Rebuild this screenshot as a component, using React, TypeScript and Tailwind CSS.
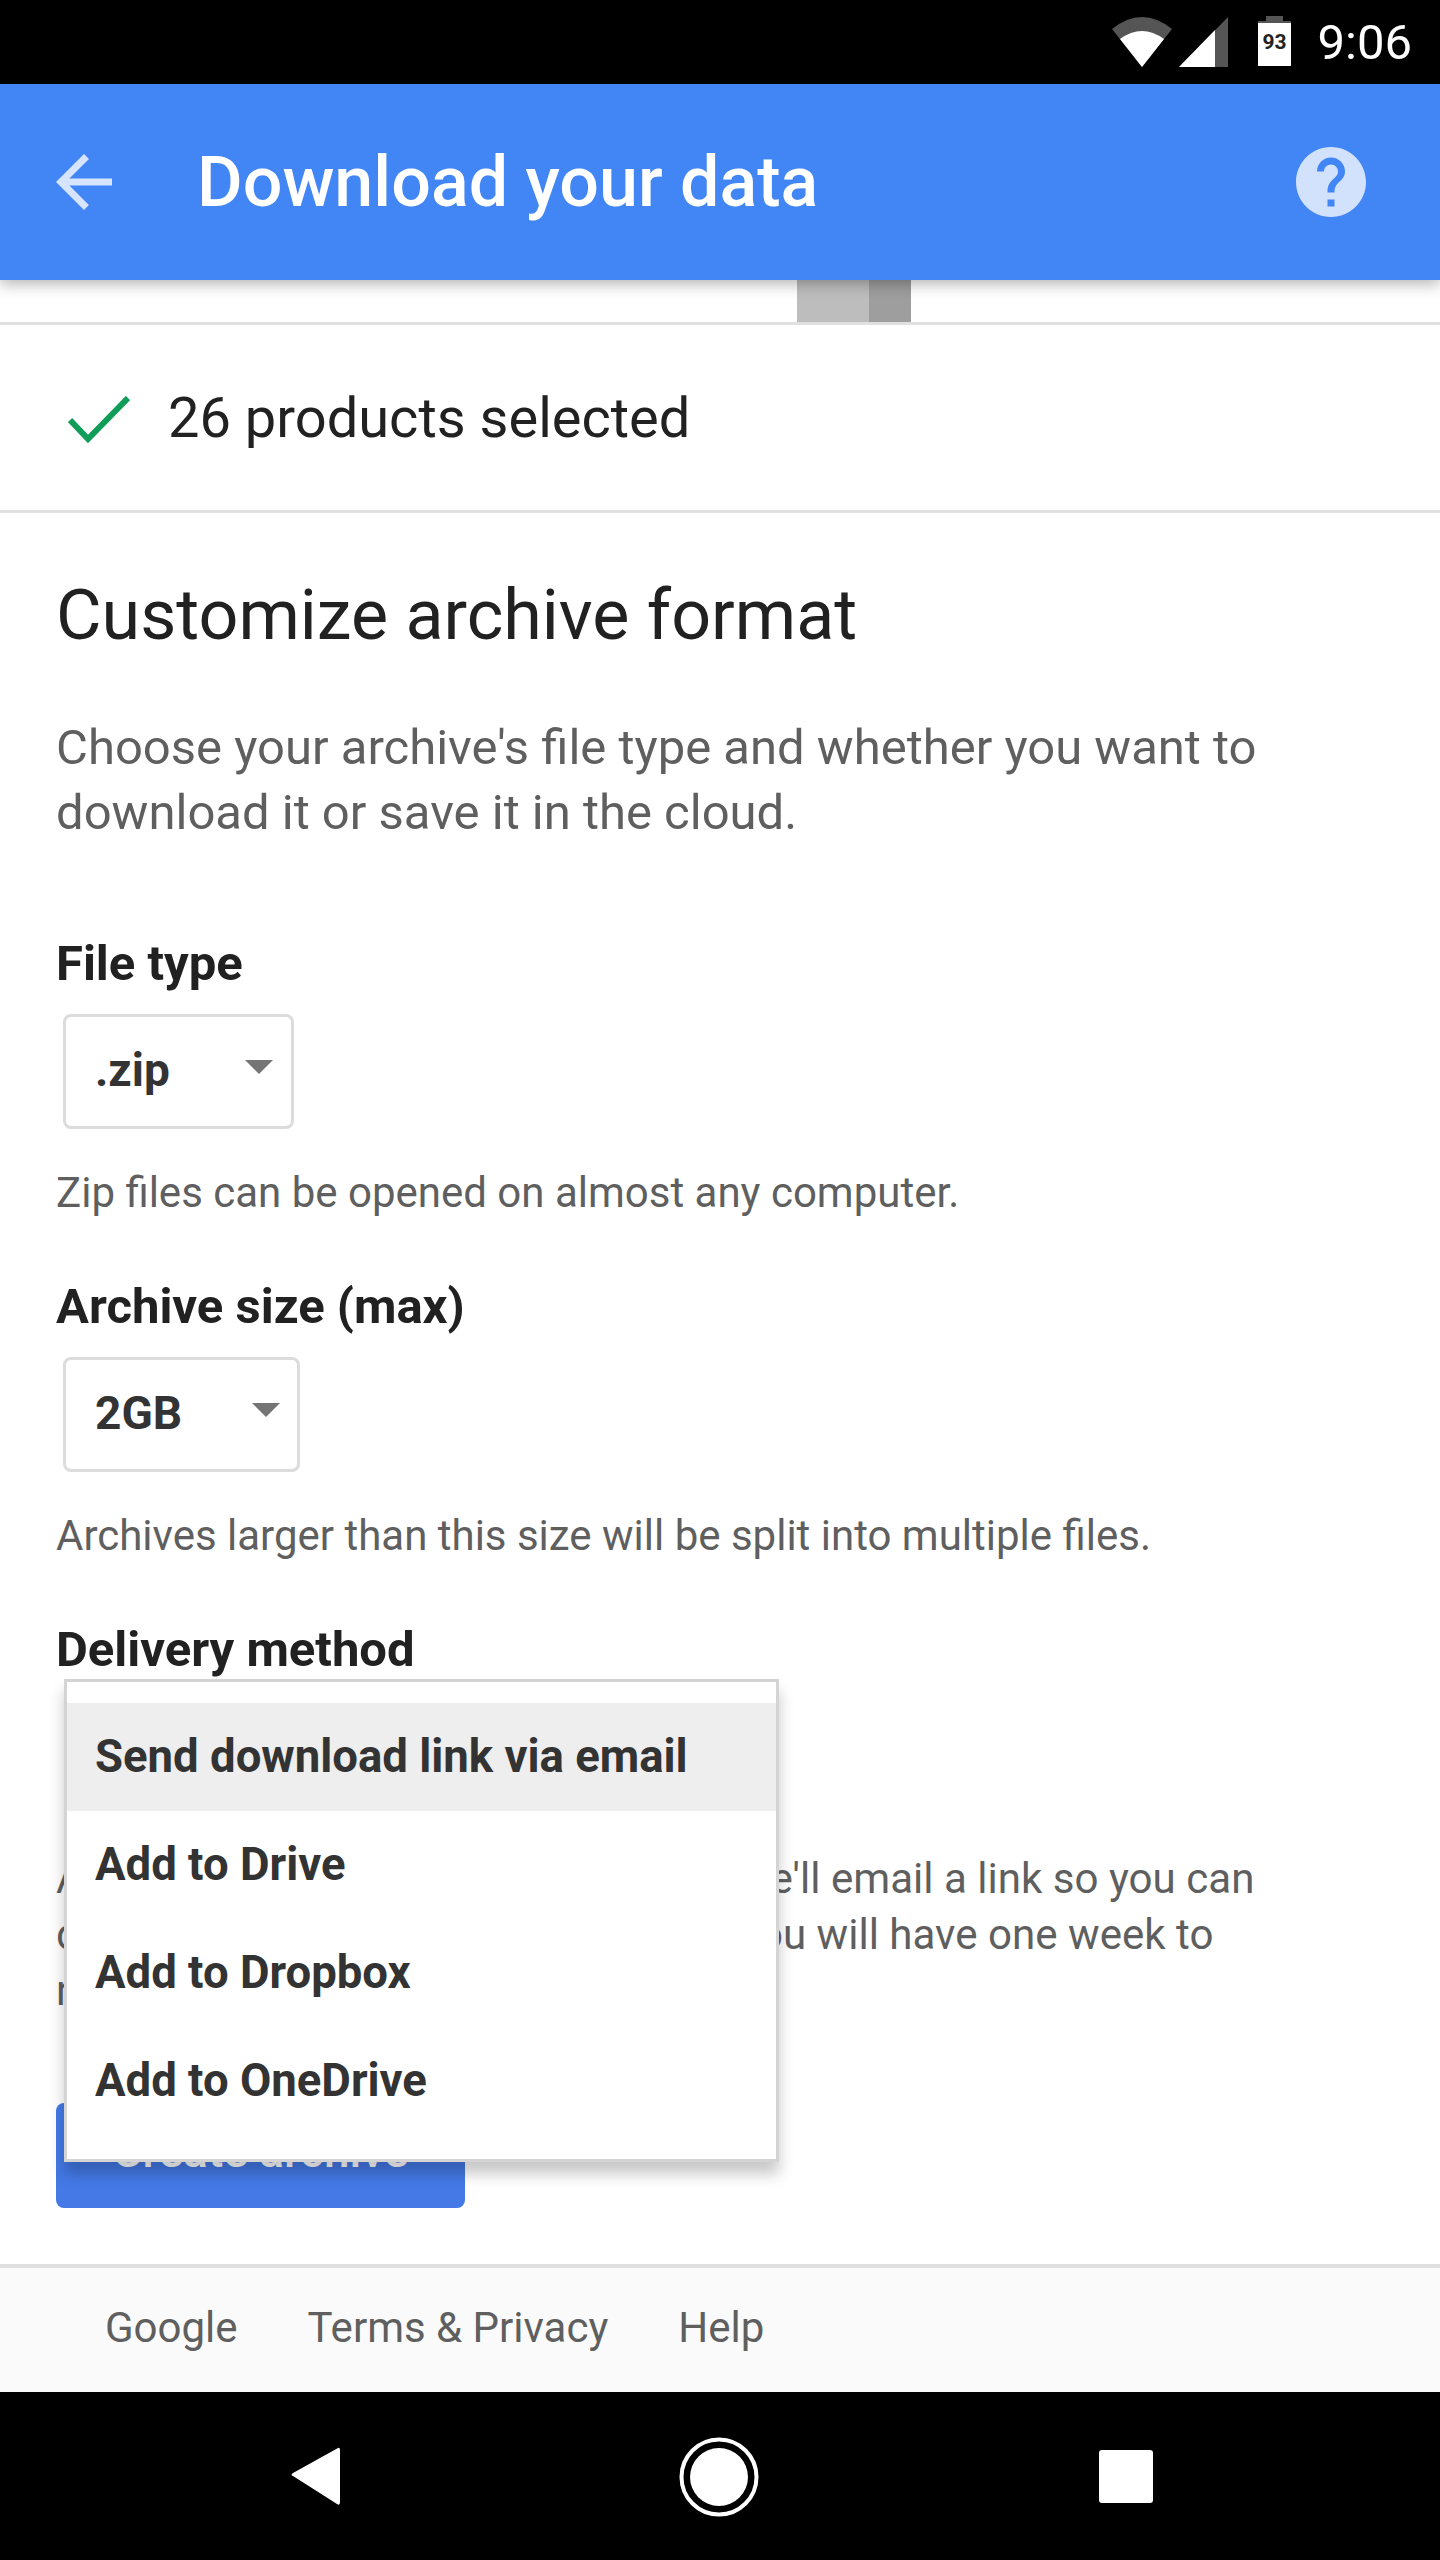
const font = "font-['Roboto',sans-serif]";

function StatusBar() {
  return (
    <div className="h-[84px] shrink-0 bg-black flex items-center justify-end pr-[28px]">
      <svg width="60" height="50" viewBox="0 0 60 50" className="mr-[7px] mt-[-1px]">
        <path d="M0 12 Q30 -12 60 12 L30 50 Z" fill="#555" />
        <path d="M8 22 Q30 6 52 22 L30 50 Z" fill="#fff" />
      </svg>
      <svg width="49" height="50" viewBox="0 0 49 50" className="mr-[30px] mt-[-1px]">
        <path d="M0 50 L49 0 V50 Z" fill="#555" />
        <path d="M0 50 L36 13 V50 Z" fill="#fff" />
      </svg>
      <svg width="33" height="50" viewBox="0 0 33 50" className="mr-[27px] mt-[-2px]">
        <rect x="8" y="0" width="17" height="6" fill="#555" />
        <rect x="0" y="5" width="33" height="6" fill="#555" />
        <rect x="0" y="7" width="33" height="43" fill="#fff" />
        <text x="16.5" y="33" textAnchor="middle" fontSize="21" fontWeight="700" fill="#222" fontFamily="Roboto">93</text>
      </svg>
      <span className="text-[49px] leading-none text-white">9:06</span>
    </div>
  );
}

function Header() {
  return (
    <div className="relative z-10 h-[196px] shrink-0 bg-[#4285f4] shadow-[0_4px_14px_rgba(0,0,0,0.3)] flex items-center pl-[42px] pr-[67px]">
      <svg width="84" height="84" viewBox="0 0 24 24" fill="#d6e4fd">
        <path d="M20 11H7.83l5.59-5.59L12 4l-8 8 8 8 1.41-1.41L7.83 13H20v-2z" />
      </svg>
      <h1 className="ml-[71px] flex-1 text-[70px] font-medium text-white leading-none">Download your data</h1>
      <svg width="84" height="84" viewBox="0 0 24 24" fill="#d2e2fc">
        <path d="M12 2C6.48 2 2 6.48 2 12s4.48 10 10 10 10-4.48 10-10S17.52 2 12 2zm1 17h-2v-2h2v2zm2.07-7.75l-.9.92C13.45 12.9 13 13.5 13 15h-2v-.5c0-1.1.45-2.1 1.17-2.83l1.24-1.26c.37-.36.59-.86.59-1.41 0-1.1-.9-2-2-2s-2 .9-2 2H8c0-2.21 1.79-4 4-4s4 1.79 4 4c0 .88-.36 1.68-.93 2.25z" />
      </svg>
    </div>
  );
}

function Select({ value, width, gap }: { value: string; width: string; gap: string }) {
  return (
    <div className={`ml-[7px] mt-[22px] h-[115px] ${width} rounded-[8px] border-[3px] border-[#dcdcdc] flex items-center pl-[29px]`}>
      <span className="mb-[4px] text-[46px] font-bold text-[#333] leading-none">{value}</span>
      <span className={`${gap} mb-[9px] h-0 w-0 border-x-[14px] border-t-[14px] border-x-transparent border-t-[#757575]`} />
    </div>
  );
}

function Label({ children }: { children: string }) {
  return <div className="text-[49px] font-bold text-[#212121] leading-[56px]">{children}</div>;
}

function Hint({ children }: { children: string }) {
  return <p className="mt-[36px] text-[42px] text-[#5f5f5f] leading-[56px]">{children}</p>;
}

function Dropdown() {
  const items = ["Send download link via email", "Add to Drive", "Add to Dropbox", "Add to OneDrive"];
  return (
    <div className="absolute left-[64px] top-[1399px] w-[715px] border-[3px] border-[#d4d4d4] bg-white pt-[21px] pb-[24px] shadow-[0_12px_14px_rgba(0,0,0,0.22)]">
      {items.map((item, i) => (
        <div key={item} className={`h-[108px] flex items-center pl-[28px] text-[45.5px] font-bold text-[#333] ${i === 0 ? "bg-[#eeeeee]" : ""}`}>
          {item}
        </div>
      ))}
    </div>
  );
}

export default function App() {
  return (
    <div className={`${font} relative h-[2560px] w-[1440px] overflow-hidden bg-white flex flex-col`}>
      <StatusBar />
      <Header />
      <div className="relative flex-1 flex flex-col">
        <div className="h-[42px] shrink-0 pl-[797px] flex">
          <div className="h-full w-[72px] bg-[#bdbdbd]" />
          <div className="h-full w-[42px] bg-[#9e9e9e]" />
        </div>
        <div className="h-[191px] shrink-0 border-y-[3px] border-[#e0e0e0] flex items-center pl-[68px]">
          <svg width="62" height="48" viewBox="0 0 62 48" fill="none" stroke="#0f9d58" strokeWidth="6" className="mt-[5px]">
            <path d="M2 24 L20 43 L60 2" />
          </svg>
          <span className="ml-[38px] text-[56px] text-[#212121] leading-none">26 products selected</span>
        </div>
        <div className="flex-1 px-[56px]">
          <h2 className="mt-[62px] text-[70px] text-[#212121] leading-[80px]">Customize archive format</h2>
          <p className="mt-[60px] text-[49px] text-[#5f5f5f] leading-[65px]">
            Choose your archive's file type and whether you want to<br />download it or save it in the cloud.
          </p>
          <div className="mt-[91px]"><Label>File type</Label></div>
          <Select value=".zip" width="w-[231px]" gap="ml-[75px]" />
          <Hint>Zip files can be opened on almost any computer.</Hint>
          <div className="mt-[58px]"><Label>Archive size (max)</Label></div>
          <Select value="2GB" width="w-[237px]" gap="ml-[70px]" />
          <Hint>Archives larger than this size will be split into multiple files.</Hint>
          <div className="mt-[58px]"><Label>Delivery method</Label></div>
          <p className="mt-[173px] text-[42.1px] text-[#5f5f5f] leading-[56px] whitespace-nowrap">
            After the archive has been prepared, we'll email a link so you can<br />
            download its contents from Google. You will have one week to<br />
            retrieve it.
          </p>
          <button className="mt-[84px] h-[105px] w-[409px] rounded-[8px] bg-[#4479e6] pb-[8px] text-[46px] font-medium text-white">Create archive</button>
        </div>
        <div className="h-[128px] shrink-0 border-t-[4px] border-[#e0e0e0] bg-[#fafafa] flex items-center pb-[6px] pl-[105px] gap-[70px] text-[42px] text-[#5f5f5f]">
          <span>Google</span>
          <span>Terms &amp; Privacy</span>
          <span>Help</span>
        </div>
        <Dropdown />
      </div>
      <div className="h-[168px] shrink-0 bg-black flex items-center">
        <svg width="1440" height="168" viewBox="0 0 1440 168">
          <path d="M338 56 Q340 55 340 59 V110 Q340 114 337 112 L293 84 Q290 83 293 81 Z" fill="#fff" />
          <circle cx="719" cy="85" r="37.5" fill="none" stroke="#fff" strokeWidth="4" />
          <circle cx="719" cy="85" r="29" fill="#fff" />
          <rect x="1099" y="58" width="54" height="53" rx="3" fill="#fff" />
        </svg>
      </div>
    </div>
  );
}
